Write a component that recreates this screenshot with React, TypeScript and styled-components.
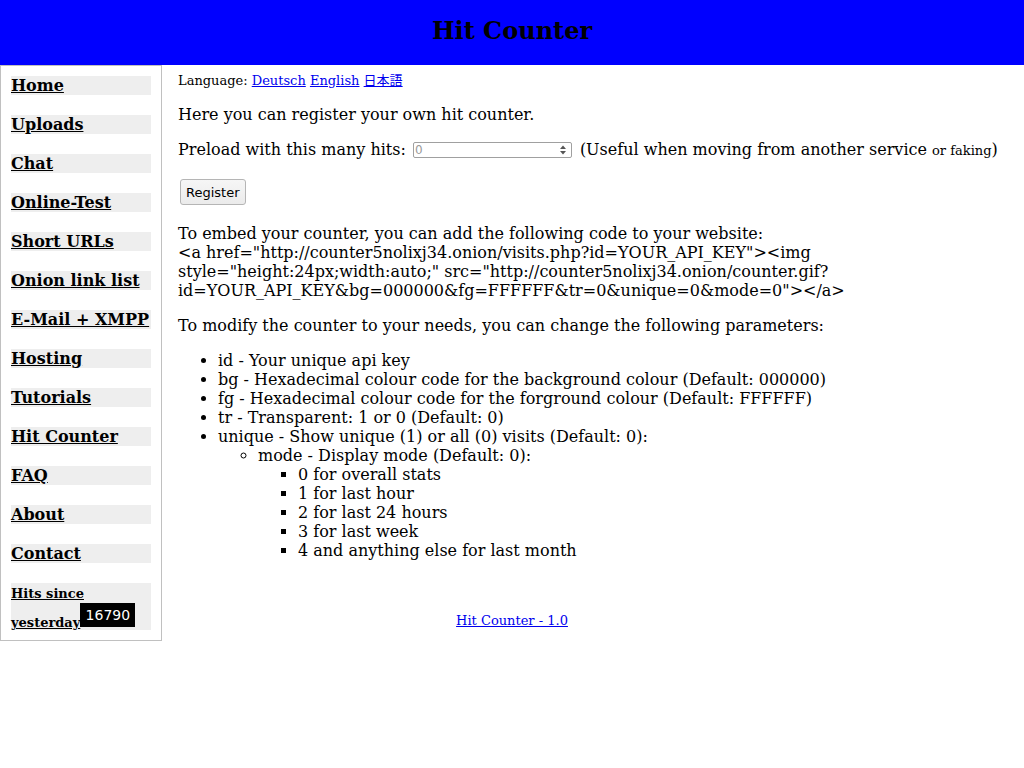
import React from "react";
import styled, { createGlobalStyle } from "styled-components";

const GlobalStyle = createGlobalStyle`
  html, body { margin: 0; padding: 0; background: #fff; }
  body {
    font-family: "DejaVu Serif", serif;
    font-size: 16px;
    color: #000;
  }
`;

const Header = styled.header`
  height: 65px;
  background: #0000ff;
  display: flex;
  align-items: center;
  justify-content: center;
`;

const Title = styled.h1`
  margin: 0;
  font-family: "DejaVu Serif", serif;
  font-size: 24px;
  font-weight: bold;
  line-height: 1;
  padding-bottom: 3px;
`;

const Layout = styled.div`
  display: flex;
  align-items: flex-start;
`;

const Sidebar = styled.nav`
  flex: 0 0 auto;
  width: 140px;
  padding: 10px;
  border: 1px solid #c0c0c0;
  display: flex;
  flex-direction: column;
  gap: 20px;
`;

const MenuItem = styled.div`
  background: #eeeeee;
  font-family: "DejaVu Serif", serif;
  font-size: 16px;
  line-height: 19px;
  height: 19px;
  font-weight: bold;
  white-space: nowrap;
`;

const MenuLink = styled.a`
  color: #000;
  text-decoration: underline;
`;

const HitsBox = styled.div`
  background: #eeeeee;
  font-family: "DejaVu Serif", serif;
  font-size: 16px;
  line-height: 19px;
  height: 47px;
`;

const HitsLabel = styled.a`
  font-size: 13px;
  font-weight: bold;
  color: #000;
  text-decoration: underline;
`;

const CounterImage = styled.span`
  display: inline-block;
  overflow: hidden;
  vertical-align: baseline;
  width: 55px;
  height: 24px;
  background: #000;
  color: #fff;
  font-family: "DejaVu Sans", sans-serif;
  font-size: 14px;
  line-height: 24px;
  text-align: center;
`;

const Main = styled.main`
  flex: 1 1 auto;
  padding: 8px 16px 0 16px;
  font-family: "DejaVu Serif", serif;
`;

const LanguageBar = styled.div`
  font-family: "DejaVu Serif", serif;
  font-size: 13px;
  line-height: 15px;
  margin-bottom: 17px;
`;

const Link = styled.a`
  color: #0000ee;
  text-decoration: underline;
`;

const CjkLink = styled.a`
  color: #0000ee;
  text-decoration: underline;
  font-family: "Noto Sans CJK JP", sans-serif;
  font-size: 13px;
  line-height: 1;
`;

const Para = styled.p`
  margin: 16px 0;
  font-family: "DejaVu Serif", serif;
  font-size: 16px;
  line-height: 19px;
`;

const Small = styled.small`
  font-size: 13px;
  line-height: 1;
`;

const NumberWrap = styled.span`
  position: relative;
  display: inline-block;
  overflow: hidden;
  vertical-align: -3px;
  margin: 0 8px 0 7px;
`;

const NumberInput = styled.input`
  display: block;
  box-sizing: border-box;
  width: 159px;
  height: 16px;
  border: 1px solid #a0a0a0;
  border-radius: 2px;
  padding: 0 16px 0 1px;
  font-family: "DejaVu Sans", sans-serif;
  font-size: 12px;
  line-height: 14px;
  background: #fff;
  outline: none;
  -moz-appearance: textfield;
  &::placeholder { color: #9a9a9a; }
  &::-webkit-inner-spin-button,
  &::-webkit-outer-spin-button { -webkit-appearance: none; margin: 0; }
`;

const Spinner = styled.svg`
  position: absolute;
  right: 6px;
  top: 3px;
  pointer-events: none;
`;

const ButtonRow = styled.div`
  display: flow-root;
  margin: 16px 0;
`;

const Button = styled.button`
  display: block;
  margin: 4px 2px 3px;
  height: 26px;
  padding: 0 5px;
  font-family: "DejaVu Sans", sans-serif;
  font-size: 13px;
  color: #000;
  background: linear-gradient(#f6f6f6, #ebebeb);
  border: 1px solid #b5b5b5;
  border-radius: 3px;
`;

const List = styled.ul<{ $type: string }>`
  margin: 0;
  padding-left: 40px;
  list-style-type: ${(p) => p.$type};
  font-family: "DejaVu Serif", serif;
  font-size: 16px;
  line-height: 19px;
`;

const TopList = styled(List)`
  margin: 16px 0;
`;

const Footer = styled.div`
  margin: 53px 0 0 -162px;
  text-align: center;
  font-family: "DejaVu Serif", serif;
  font-size: 13px;
  line-height: 15px;
`;

const menu = [
  "Home",
  "Uploads",
  "Chat",
  "Online-Test",
  "Short URLs",
  "Onion link list",
  "E-Mail + XMPP",
  "Hosting",
  "Tutorials",
  "Hit Counter",
  "FAQ",
  "About",
  "Contact",
];

export default function App() {
  return (
    <>
      <GlobalStyle />
      <Header>
        <Title>Hit Counter</Title>
      </Header>
      <Layout>
        <Sidebar>
          {menu.map((m) => (
            <MenuItem key={m}>
              <MenuLink href="#">{m}</MenuLink>
            </MenuItem>
          ))}
          <HitsBox>
            <HitsLabel href="#">Hits since yesterday</HitsLabel>
            <CounterImage>16790</CounterImage>
          </HitsBox>
        </Sidebar>
        <Main>
          <LanguageBar>
            Language: <Link href="#">Deutsch</Link> <Link href="#">English</Link>{" "}
            <CjkLink href="#">日本語</CjkLink>
          </LanguageBar>
          <Para>Here you can register your own hit counter.</Para>
          <Para>
            Preload with this many hits:
            <NumberWrap>
              <NumberInput type="number" placeholder="0" />
              <Spinner width="6" height="10" viewBox="0 0 6 10">
                <path d="M3 0.5 L6 4 L0 4 Z" fill="#555" />
                <path d="M3 9.5 L6 6 L0 6 Z" fill="#555" />
              </Spinner>
            </NumberWrap>
            (Useful when moving from another service <Small>or faking</Small>)
          </Para>
          <ButtonRow>
            <Button type="button">Register</Button>
          </ButtonRow>
          <Para>
            To embed your counter, you can add the following code to your website:
            <br />
            {'<a href="http://counter5nolixj34.onion/visits.php?id=YOUR_API_KEY"><img style="height:24px;width:auto;" src="http://counter5nolixj34.onion/counter.gif?id=YOUR_API_KEY&bg=000000&fg=FFFFFF&tr=0&unique=0&mode=0"></a>'}
          </Para>
          <Para>To modify the counter to your needs, you can change the following parameters:</Para>
          <TopList $type="disc">
            <li>id - Your unique api key</li>
            <li>bg - Hexadecimal colour code for the background colour (Default: 000000)</li>
            <li>fg - Hexadecimal colour code for the forground colour (Default: FFFFFF)</li>
            <li>tr - Transparent: 1 or 0 (Default: 0)</li>
            <li>
              unique - Show unique (1) or all (0) visits (Default: 0):
              <List $type="circle">
                <li>
                  mode - Display mode (Default: 0):
                  <List $type="square">
                    <li>0 for overall stats</li>
                    <li>1 for last hour</li>
                    <li>2 for last 24 hours</li>
                    <li>3 for last week</li>
                    <li>4 and anything else for last month</li>
                  </List>
                </li>
              </List>
            </li>
          </TopList>
          <Footer>
            <Link href="#">Hit Counter - 1.0</Link>
          </Footer>
        </Main>
      </Layout>
    </>
  );
}
